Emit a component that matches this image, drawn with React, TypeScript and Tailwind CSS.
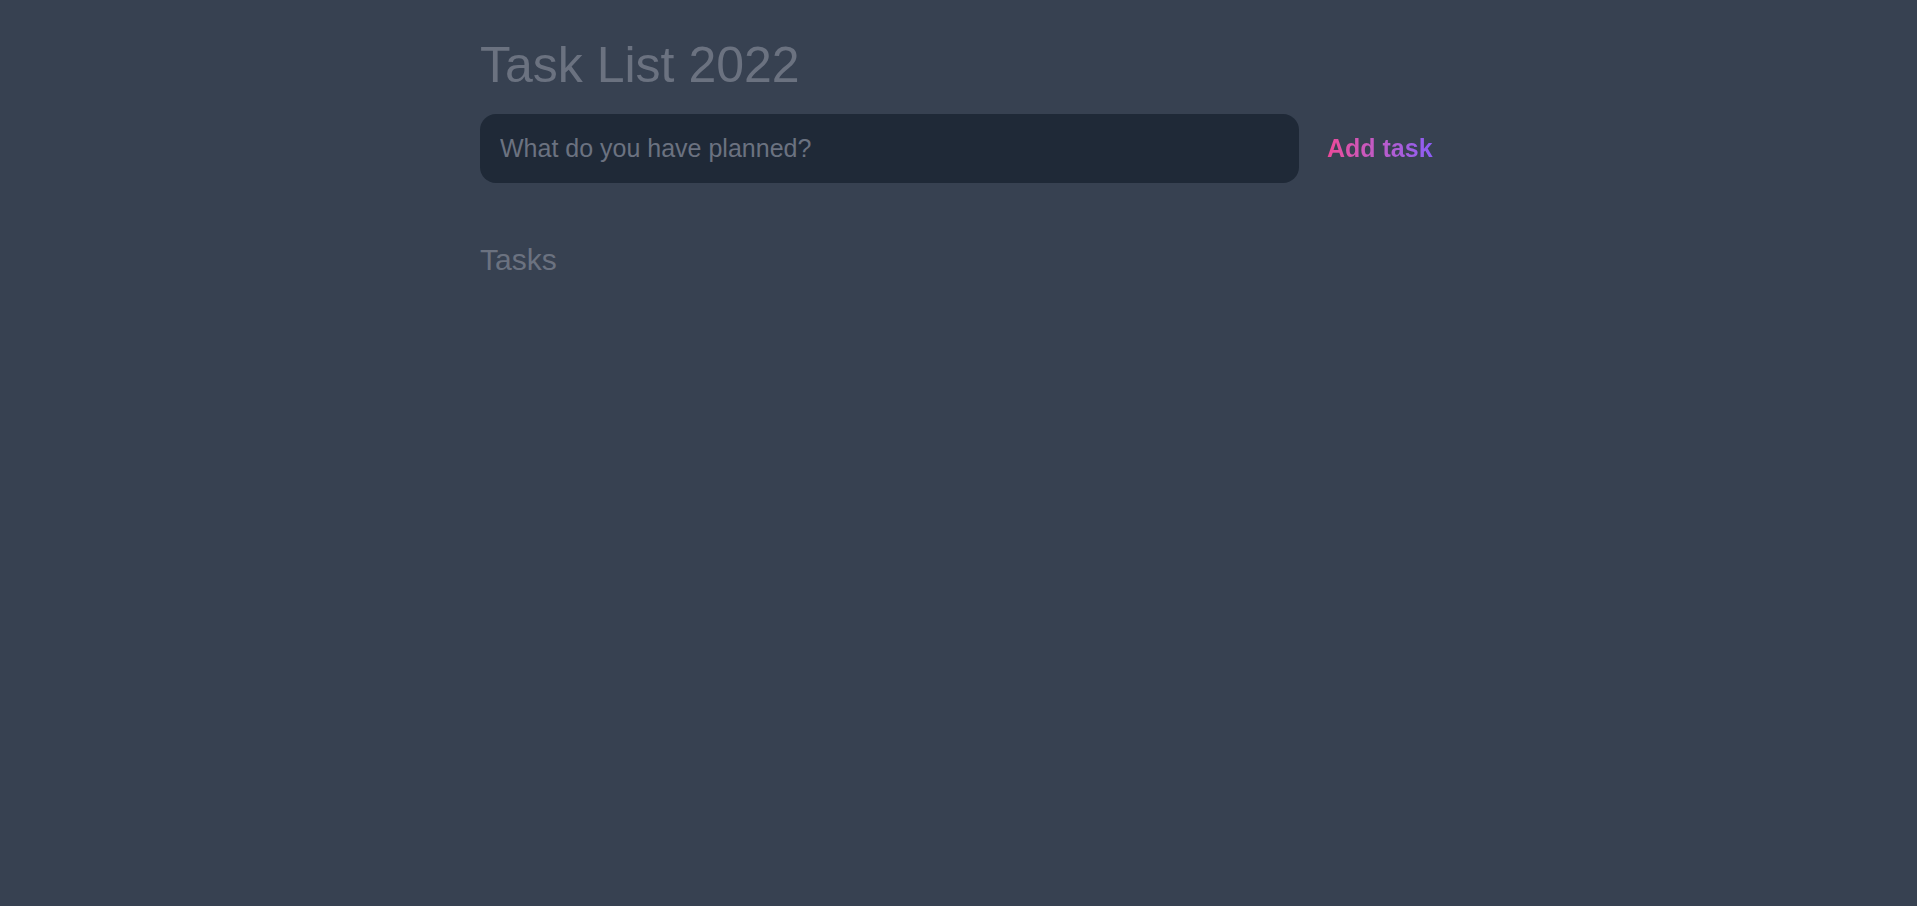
import React from "react";

export default function App() {
  return (
    <div className="min-h-screen w-full bg-[#374151]" style={{ fontFamily: '"Liberation Sans", Arial, sans-serif' }}>
      <div className="ml-[480px] w-[1000px] pt-[40px]">
        <h1 className="text-[50px] leading-none text-[#6b7280]">Task List 2022</h1>
        <div className="mt-[24px] flex items-center">
          <input
            className="h-[69px] w-[819px] shrink-0 rounded-[16px] bg-[#1f2937] px-[20px] text-[25px] text-[#9ca3af] placeholder-[#6b7280] outline-none"
            placeholder="What do you have planned?"
          />
          <button className="ml-[28px] shrink-0 whitespace-nowrap bg-gradient-to-r from-[#ec4899] to-[#8b5cf6] bg-clip-text text-[25px] font-bold text-transparent">
            Add task
          </button>
        </div>
        <h2 className="mt-[62px] text-[30px] leading-none text-[#6b7280]">Tasks</h2>
      </div>
    </div>
  );
}
